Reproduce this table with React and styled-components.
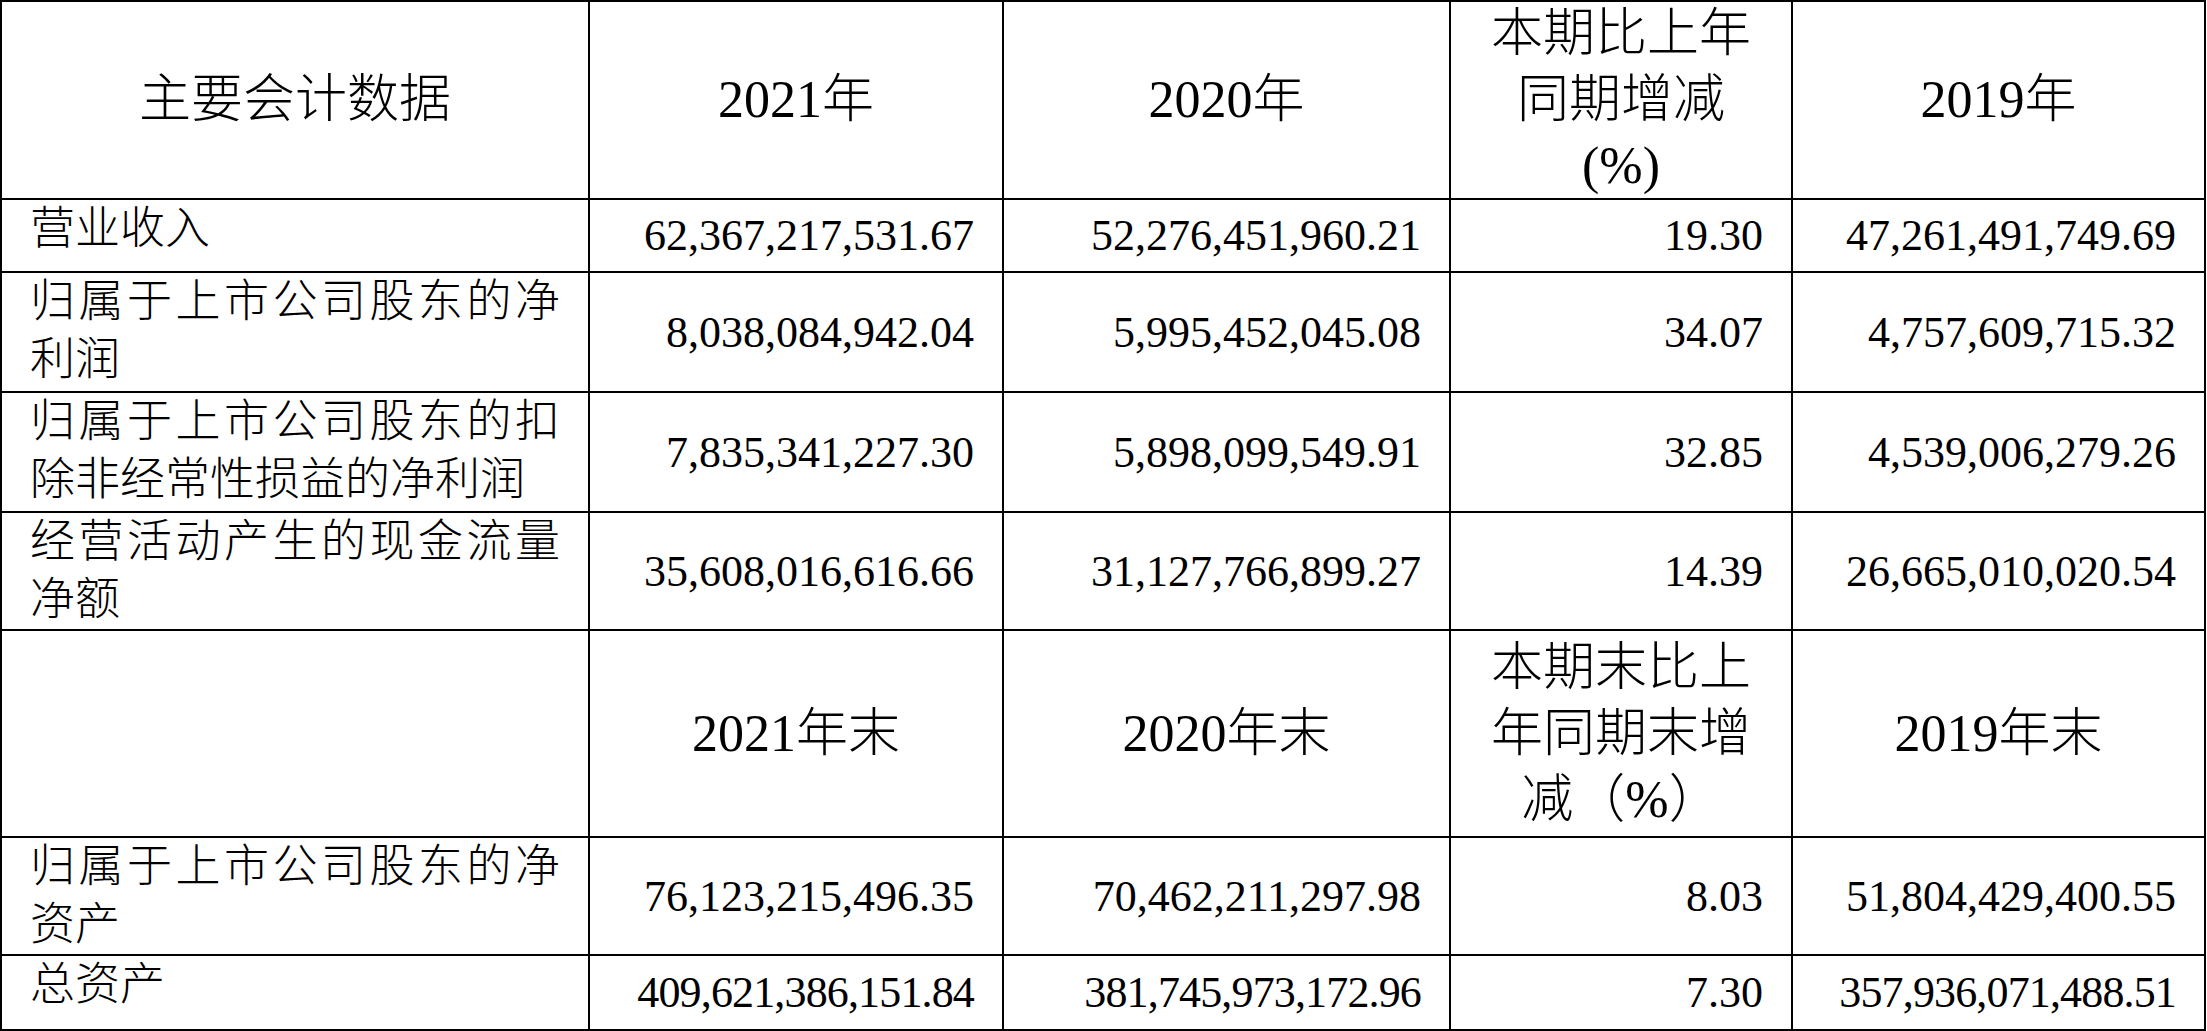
import React from "react";
import styled, { createGlobalStyle } from "styled-components";

const GlobalStyle = createGlobalStyle`
  html, body {
    margin: 0;
    padding: 0;
    background: #ffffff;
    overflow: hidden;
  }
`;

const COLUMNS = [588, 414, 447, 342, 413];
const ROWS = [198, 73, 120, 120, 118, 207, 118, 75];

const flowRows = [
  { label: "营业收入", values: ["62,367,217,531.67", "52,276,451,960.21", "19.30", "47,261,491,749.69"] },
  { label: "归属于上市公司股东的净利润", values: ["8,038,084,942.04", "5,995,452,045.08", "34.07", "4,757,609,715.32"] },
  { label: "归属于上市公司股东的扣除非经常性损益的净利润", values: ["7,835,341,227.30", "5,898,099,549.91", "32.85", "4,539,006,279.26"] },
  { label: "经营活动产生的现金流量净额", values: ["35,608,016,616.66", "31,127,766,899.27", "14.39", "26,665,010,020.54"] },
];

const stockRows = [
  { label: "归属于上市公司股东的净资产", values: ["76,123,215,496.35", "70,462,211,297.98", "8.03", "51,804,429,400.55"] },
  { label: "总资产", values: ["409,621,386,151.84", "381,745,973,172.96", "7.30", "357,936,071,488.51"] },
];

function App() {
  return (
    <>
      <GlobalStyle />
      <Table>
        <HeadCell>主要会计数据</HeadCell>
        <HeadCell>2021年</HeadCell>
        <HeadCell>2020年</HeadCell>
        <HeadCell>
          本期比上年
          <br />
          同期增减
          <br />
          (%)
        </HeadCell>
        <HeadCell>2019年</HeadCell>

        {flowRows.map((row) => (
          <DataRow key={row.label} {...row} />
        ))}

        <HeadCell />
        <HeadCell>2021年末</HeadCell>
        <HeadCell>2020年末</HeadCell>
        <HeadCell>
          本期末比上
          <br />
          年同期末增
          <br />
          减（%）
        </HeadCell>
        <HeadCell>2019年末</HeadCell>

        {stockRows.map((row) => (
          <DataRow key={row.label} {...row} />
        ))}
      </Table>
    </>
  );
}

function DataRow({ label, values }) {
  return (
    <>
      <LabelCell>{label}</LabelCell>
      {values.map((v, i) => (
        <ValueCell key={i} $tight={v.length > 17}>
          {v}
        </ValueCell>
      ))}
    </>
  );
}

export default App;

const Table = styled.div`
  display: grid;
  grid-template-columns: ${COLUMNS.map((c) => `${c}px`).join(" ")};
  grid-template-rows: ${ROWS.map((r) => `${r}px`).join(" ")};
  width: max-content;
  border-top: 2px solid #000;
  border-left: 2px solid #000;
  color: #000;
  font-family: "Liberation Serif", "Noto Sans CJK SC", serif;
  font-weight: 300;
`;

const Cell = styled.div`
  box-sizing: border-box;
  border-right: 2px solid #000;
  border-bottom: 2px solid #000;
  overflow: hidden;
`;

const HeadCell = styled(Cell)`
  display: flex;
  align-items: center;
  justify-content: center;
  text-align: center;
  font-size: 52px;
  line-height: 66px;
`;

const LabelCell = styled(Cell)`
  padding: 0 28px 0 28px;
  font-size: 45px;
  line-height: 58px;
  text-align: justify;
`;

const ValueCell = styled(Cell)`
  display: flex;
  align-items: center;
  justify-content: flex-end;
  padding-right: 28px;
  font-size: 44px;
  white-space: nowrap;
  letter-spacing: ${(p) => (p.$tight ? "-0.85px" : "0")};
`;
